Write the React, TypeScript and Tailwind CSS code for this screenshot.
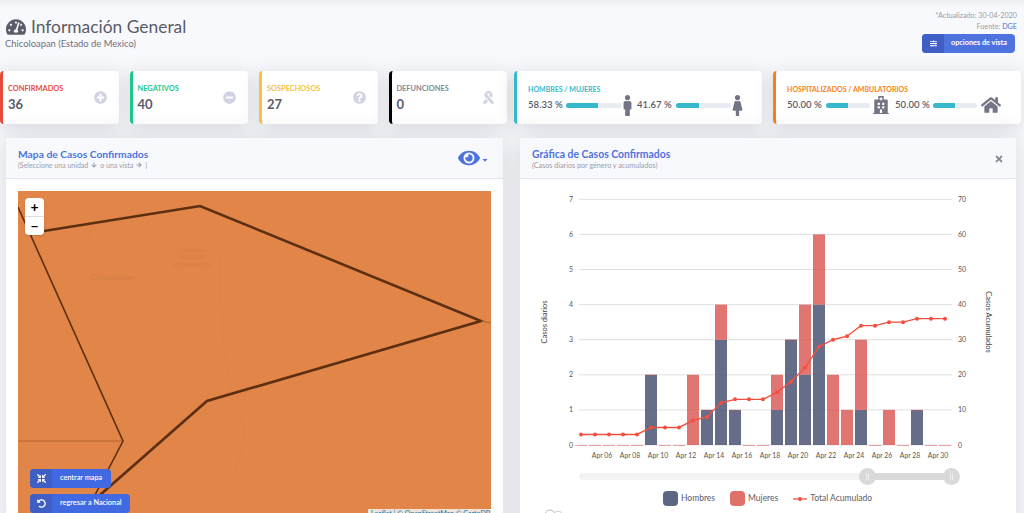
import React from 'react';
import {
  FaTachometerAlt, FaPlusCircle, FaMinusCircle, FaQuestionCircle, FaRibbon, FaMale, FaFemale,
  FaHospital, FaHome, FaEye, FaTimes, FaCaretDown, FaArrowDown, FaArrowRight, FaSlidersH,
  FaCompressArrowsAlt, FaUndoAlt,
} from 'react-icons/fa';

const dias = [
  { h: 0, m: 0 }, { h: 0, m: 0 }, { h: 0, m: 0 }, { h: 0, m: 0 }, { h: 0, m: 0 }, { h: 2, m: 0 },
  { h: 0, m: 0 }, { h: 0, m: 0 }, { h: 0, m: 2 }, { h: 1, m: 0 }, { h: 3, m: 1 }, { h: 1, m: 0 },
  { h: 0, m: 0 }, { h: 0, m: 0 }, { h: 1, m: 1 }, { h: 3, m: 0 }, { h: 2, m: 2 }, { h: 4, m: 2 },
  { h: 0, m: 2 }, { h: 0, m: 1 }, { h: 1, m: 2 }, { h: 0, m: 0 }, { h: 0, m: 1 }, { h: 0, m: 0 },
  { h: 1, m: 0 }, { h: 0, m: 0 }, { h: 0, m: 0 },
];
const acumulado = [3, 3, 3, 3, 3, 5, 5, 5, 7, 8, 12, 13, 13, 13, 15, 18, 22, 28, 30, 31, 34, 34, 35, 35, 36, 36, 36];
const fechas = ['06', '08', '10', '12', '14', '16', '18', '20', '22', '24', '26', '28', '30'];

const Tarjeta = ({ titulo, valor, borde, color, icono }: { titulo: string; valor: string; borde: string; color: string; icono: React.ReactNode }) => (
  <div className={`h-[53px] flex-1 flex items-center justify-between bg-white rounded border-l-[3px] pl-[5px] pr-[12px] shadow-[0_2px_18px_rgba(58,59,69,0.16)] ${borde}`}>
    <div className="mt-[2px]">
      <div className={`text-[7.4px] font-bold leading-[10px] ${color}`}>{titulo}</div>
      <div className="text-[13px] font-bold leading-[18px] mt-[1px] text-[#5a5c69]">{valor}</div>
    </div>
    <div className="text-[13px] text-[#d1d3e2]">{icono}</div>
  </div>
);

const Barra = ({ texto, ancho, largo, separacion, icono }: { texto: string; ancho: string; largo: string; separacion: string; icono: React.ReactNode }) => (
  <div className="flex items-center">
    <span className="w-[36px] text-[9.6px] font-semibold text-[#5a5c69] whitespace-nowrap">{texto}</span>
    <div className={`h-[5px] bg-[#eaecf4] rounded ml-[2px] ${largo}`}>
      <div className={`h-full bg-[#36b9cc] rounded-l ${ancho}`} />
    </div>
    <div className={`text-[#737585] ${separacion}`}>{icono}</div>
  </div>
);

const TarjetaDoble = ({ titulo, borde, color, children }: { titulo: string; borde: string; color: string; children: React.ReactNode }) => (
  <div className={`h-[53px] w-[248px] bg-white rounded border-l-[3px] pl-[11px] pr-[6px] pt-[13px] shadow-[0_2px_18px_rgba(58,59,69,0.16)] ${borde}`}>
    <div className={`text-[7px] font-bold leading-[10px] ${color}`}>{titulo}</div>
    <div className="flex items-center h-[20px] mt-[1px]">{children}</div>
  </div>
);

const BotonIcono = ({ texto, icono, ancho }: { texto: string; icono: React.ReactNode; ancho: string }) => (
  <div className={`flex h-[19px] items-center rounded bg-[#4169e1] text-white overflow-hidden ${ancho}`}>
    <div className="flex h-full w-[22px] shrink-0 items-center justify-center bg-[#3f5fc4] text-[9px]">{icono}</div>
    <div className="pl-[8px] text-[7.3px] font-semibold whitespace-nowrap">{texto}</div>
  </div>
);

const Grafica = () => {
  const x = (i: number) => 61 + 14 * i;
  const y = (v: number) => 266 - 35.1 * v;
  const puntos = acumulado.map((v, i) => `${x(i)},${y(v / 10)}`).join(' ');
  return (
    <svg width={496} height={285} viewBox="0 0 496 285" className="block shrink-0" fontFamily="Lato, sans-serif">
      {[0, 1, 2, 3, 4, 5, 6, 7].map((n) => (
        <g key={n}>
          <line x1={59} x2={432} y1={y(n)} y2={y(n)} stroke="#e0e0e0" />
          <text x={53} y={y(n) + 2.5} fontSize={7} fill="#555" textAnchor="end">{n}</text>
          <text x={438} y={y(n) + 2.5} fontSize={7} fill="#555">{n * 10}</text>
        </g>
      ))}
      {dias.map((d, i) => (
        <g key={i}>
          {d.h > 0 && <rect x={x(i) - 6} y={y(d.h)} width={12} height={35.1 * d.h} fill="#4a5473" fillOpacity={0.85} />}
          <rect x={x(i) - 6} y={y(d.h + d.m)} width={12} height={Math.max(35.1 * d.m, 0.6)} fill="#d9534f" fillOpacity={0.8} />
        </g>
      ))}
      <polyline points={puntos} fill="none" stroke="#f4503f" strokeWidth={1.4} />
      {acumulado.map((v, i) => (
        <circle key={i} cx={x(i)} cy={y(v / 10)} r={2} fill="#f4503f" />
      ))}
      {fechas.map((f, i) => (
        <text key={f} x={82 + 28 * i} y={279} fontSize={6.8} fill="#555" textAnchor="middle">Apr {f}</text>
      ))}
      <text transform="translate(27 143) rotate(-90)" fontSize={7.5} fill="#444" textAnchor="middle">Casos diarios</text>
      <text transform="translate(466 143) rotate(90)" fontSize={7.5} fill="#444" textAnchor="middle">Casos Acumulados</text>
    </svg>
  );
};

const Manija = ({ lado }: { lado: string }) => (
  <div className={`absolute top-[-5px] flex h-[17px] w-[17px] items-center justify-center gap-[1px] rounded-full bg-[#d9d9d9] ${lado}`}>
    <i className="h-[7px] w-[1px] bg-[#efefef]" />
    <i className="h-[7px] w-[1px] bg-[#efefef]" />
  </div>
);

const Deslizador = () => (
  <div className="relative ml-[59px] mt-[9px] h-[7px] w-[381px] bg-[#f3f3f3] rounded">
    <div className="absolute right-[8px] top-0 h-full w-[85px] bg-[#d9d9d9]" />
    <Manija lado="left-[280px]" />
    <Manija lado="right-0" />
  </div>
);

const Mapa = () => (
  <div className="relative flex-1 bg-[#e28549] overflow-hidden">
    <svg width={473} height={322} viewBox="0 0 473 322" className="block" fontFamily="Lato, sans-serif">
      <g fill="none" stroke="#de8247" strokeWidth={1}>
        <path d="M20 135 L60 70 L80 25" />
        <path d="M200 50 L205 150 L215 210 L228 240 L215 290" />
        <path d="M150 20 L160 50" />
      </g>
      <text x={95} y={89} fontSize={8} fill="#d37f47" textAnchor="middle">Chicoloapan</text>
      <text x={174} y={61} fontSize={6} fill="#d37f47" textAnchor="middle">SILVINA</text>
      <text x={174} y={68} fontSize={6} fill="#d37f47" textAnchor="middle">SALINAS</text>
      <text x={174} y={76} fontSize={6} fill="#d37f47" textAnchor="middle">ESPARRANZA</text>
      <path d="M0 250 L105 250" fill="none" stroke="#b5622e" strokeWidth={1} />
      <path d="M0 16 L105 250 L77 304" fill="none" stroke="#5d2f10" strokeWidth={1.6} />
      <path d="M26 40 L182 15 L463 130 L189 210 L82 304" fill="none" stroke="#5d2f10" strokeWidth={2.6} strokeLinejoin="miter" />
      <path d="M463 130 L473 132" fill="none" stroke="#a9602f" strokeWidth={1} />
    </svg>
    <div className="absolute left-[7px] top-[7px] w-[19px] rounded-sm bg-white text-black text-center font-bold shadow">
      <div className="h-[19px] text-[14px] leading-[18px] border-b border-[#dddddd]">+</div>
      <div className="h-[18px] text-[14px] leading-[17px]">−</div>
    </div>
    <div className="absolute left-[12px] top-[278px] flex flex-col items-start gap-[6px]">
      <BotonIcono texto="centrar mapa" ancho="w-[81px]" icono={<FaCompressArrowsAlt />} />
      <BotonIcono texto="regresar a Nacional" ancho="w-[100px]" icono={<FaUndoAlt />} />
    </div>
    <div className="absolute left-[350px] top-[318px] h-[10px] w-[123px] bg-[#f2e3d8] pl-[3px] text-[7px] leading-[9px] whitespace-nowrap text-[#0078a8]">Leaflet | © OpenStreetMap © CartoDB</div>
  </div>
);

export default function App() {
  return (
    <div className="h-[513px] w-[1024px] overflow-hidden bg-[#f8f9fc] font-['Lato',sans-serif]">
      <header className="flex h-[71px] justify-between pl-[6px] pr-[7px] shadow-[inset_0_8px_8px_-6px_rgba(0,0,0,0.07)]">
        <div className="pt-[17px]">
          <div className="flex items-center gap-[5px] text-[#5a5c69]">
            <FaTachometerAlt className="text-[20px]" />
            <h1 className="text-[17.4px] leading-[20px] font-normal">Información General</h1>
          </div>
          <p className="-ml-[1px] mt-[1px] text-[9.4px] leading-[12px] text-[#6e707e]">Chicoloapan (Estado de Mexico)</p>
        </div>
        <div className="flex flex-col items-end pt-[10px]">
          <p className="text-[7.2px] leading-[11px] text-[#9a9ba8]">*Actualizado: 30-04-2020</p>
          <p className="text-[7.2px] leading-[11px] text-[#9a9ba8]">Fuente: <span className="text-[#4e73df]">DGE</span></p>
          <div className="mt-[2px] mr-[2px] flex h-[19px] w-[93px] items-center overflow-hidden rounded bg-[#4e73df] text-white">
            <div className="flex h-full w-[22px] items-center justify-center bg-[#3f5fc4] text-[7px]"><FaSlidersH /></div>
            <div className="pl-[7px] text-[7.3px] font-bold whitespace-nowrap">opciones de vista</div>
          </div>
        </div>
      </header>

      <div className="flex h-[53px] pr-[3px]">
        <div className="flex w-[507px] gap-[11px]">
          <Tarjeta titulo="CONFIRMADOS" valor="36" borde="border-[#e74a3b]" color="text-[#e74a3b]" icono={<FaPlusCircle />} />
          <Tarjeta titulo="NEGATIVOS" valor="40" borde="border-[#1cc88a]" color="text-[#1cc88a]" icono={<FaMinusCircle />} />
          <Tarjeta titulo="SOSPECHOSOS" valor="27" borde="border-[#f6c23e]" color="text-[#f6c23e]" icono={<FaQuestionCircle />} />
          <Tarjeta titulo="DEFUNCIONES" valor="0" borde="border-black" color="text-[#858796]" icono={<FaRibbon />} />
        </div>
        <div className="ml-[7px] flex gap-[11px]">
          <TarjetaDoble titulo="HOMBRES / MUJERES" borde="border-[#36b9cc]" color="text-[#36b9cc]">
            <Barra texto="58.33 %" ancho="w-[58%]" largo="w-[56px]" separacion="-ml-[5px] -mr-[1px]" icono={<FaMale className="text-[21px]" />} />
            <Barra texto="41.67 %" ancho="w-[42%]" largo="w-[55px] ml-[3px]" separacion="-ml-[4px]" icono={<FaFemale className="text-[21px]" />} />
          </TarjetaDoble>
          <TarjetaDoble titulo="HOSPITALIZADOS / AMBULATORIOS" borde="border-[#fd7e14]" color="text-[#fd7e14]">
            <Barra texto="50.00 %" ancho="w-1/2" largo="w-[44px] ml-[3px]" separacion="ml-[2px] mr-[5px]" icono={<FaHospital className="text-[18px]" />} />
            <Barra texto="50.00 %" ancho="w-1/2" largo="w-[44px] ml-[2px]" separacion="ml-[4px]" icono={<FaHome className="text-[20px]" />} />
          </TarjetaDoble>
        </div>
      </div>

      <main className="mt-[14px] flex pl-[6px] pr-[8px] gap-[17px]">
        <section className="flex h-[400px] w-[497px] flex-col bg-white shadow-[0_0_26px_rgba(58,59,69,0.16)]">
          <div className="flex h-[41px] items-center justify-between border-b border-[#e3e6f0] bg-[#f8f9fc] pl-[12px] pr-[14px]">
            <div className="pt-[1px]">
              <h2 className="text-[10.3px] font-bold leading-[13px] text-[#4e73df]">Mapa de Casos Confirmados</h2>
              <p className="flex items-center gap-[3px] text-[7px] leading-[9px] text-[#9a9ba8]">(Seleccione una unidad <FaArrowDown className="text-[6px]" /> o una vista <FaArrowRight className="text-[6px]" />)</p>
            </div>
            <div className="flex items-center text-[#4e73df]">
              <FaEye className="text-[22px]" />
              <FaCaretDown className="text-[8px] mt-[3px] ml-[1px]" />
            </div>
          </div>
          <div className="flex flex-1 px-[12px] pt-[12px]">
            <Mapa />
          </div>
        </section>

        <section className="relative flex h-[400px] w-[496px] flex-col bg-white shadow-[0_0_26px_rgba(58,59,69,0.16)]">
          <div className="flex h-[41px] shrink-0 items-center justify-between border-b border-[#e3e6f0] bg-[#f8f9fc] pl-[12px] pr-[12px]">
            <div className="pt-[1px]">
              <h2 className="text-[10.4px] font-bold leading-[13px] text-[#4e73df]">Gráfica de Casos Confirmados</h2>
              <p className="text-[7.2px] leading-[9px] text-[#9a9ba8]">(Casos diarios por género y acumulados)</p>
            </div>
            <FaTimes className="text-[10px] text-[#858796] mt-[1px]" />
          </div>
          <Grafica />
          <Deslizador />
          <div className="mt-[11px] flex items-center gap-[15px] pl-[143px] text-[8.5px] text-[#5a5c69]">
            <span className="flex items-center gap-[3px]"><i className="h-[15px] w-[15px] rounded bg-[#4a5473] opacity-90" />Hombres</span>
            <span className="flex items-center gap-[3px]"><i className="h-[15px] w-[15px] rounded bg-[#e0706a]" />Mujeres</span>
            <span className="flex items-center gap-[3px]">
              <svg width={14} height={6}><line x1={0} x2={14} y1={3} y2={3} stroke="#f4503f" strokeWidth={1.3} /><circle cx={7} cy={3} r={2} fill="#f4503f" /></svg>
              Total Acumulado
            </span>
          </div>
          <svg width={20} height={10} className="absolute left-[24px] top-[371px]">
            <circle cx={6} cy={6} r={5} fill="none" stroke="#b8b8b8" strokeWidth={1} />
            <circle cx={14} cy={6} r={4} fill="none" stroke="#cfcfcf" strokeWidth={1} />
          </svg>
        </section>
      </main>
    </div>
  );
}
